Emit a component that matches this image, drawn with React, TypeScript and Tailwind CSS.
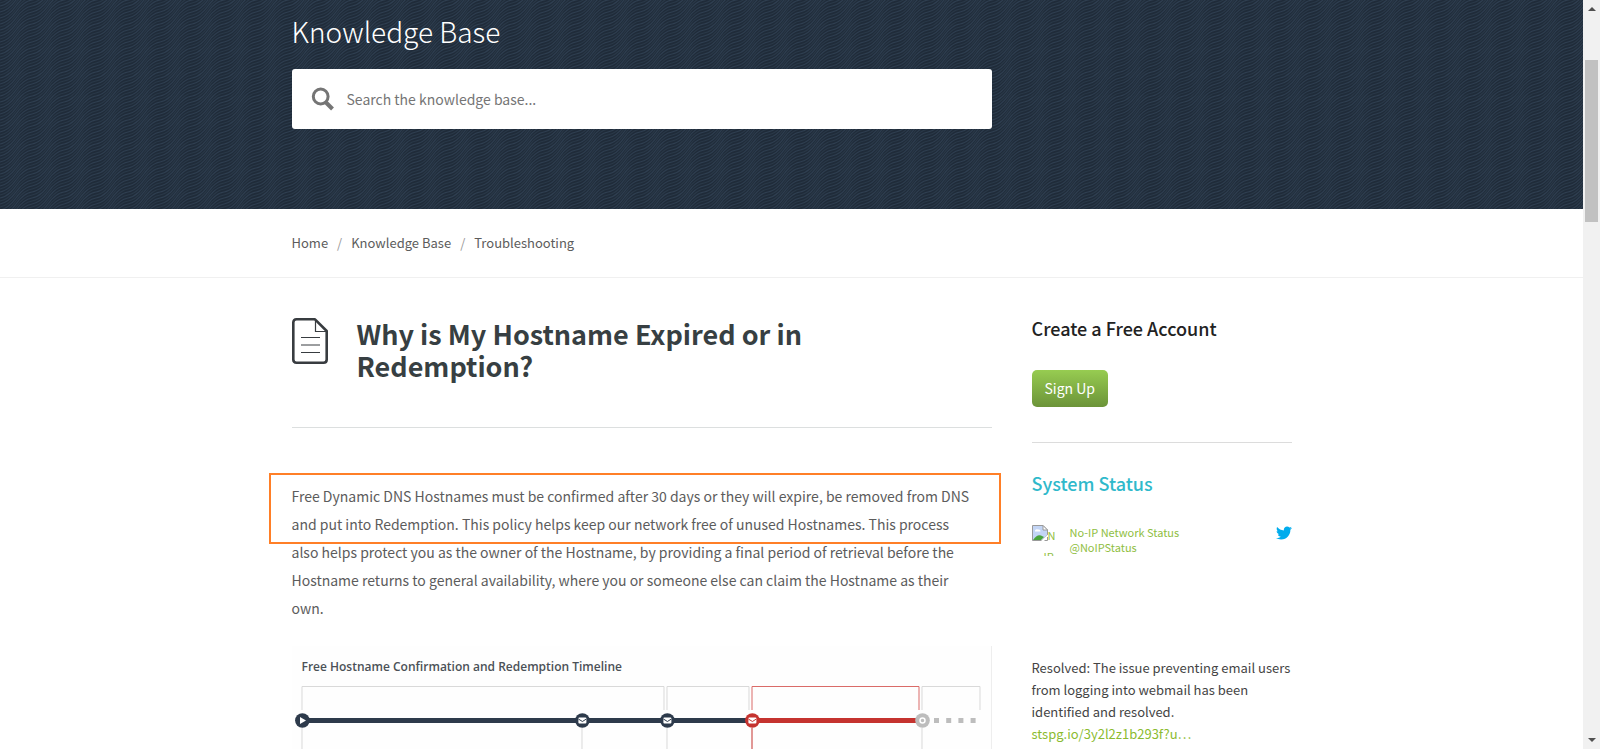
import React from "react";
import { FaTwitter } from "react-icons/fa";

const WAVES = Array.from({ length: 18 }, (_, i) => -27 + i * 3);

function WavePattern() {
  return (
    <svg className="absolute inset-0 h-full w-full" aria-hidden="true">
      <defs>
        <pattern id="waves" width="32" height="24" patternUnits="userSpaceOnUse">
          <rect width="32" height="24" fill="#1f2b39" />
          {WAVES.map((y, i) => (
            <path
              key={y}
              d={`M-1 ${y + 24}H0C6 ${y + 23} 11 ${y + 19} 16 ${y + 12}S26 ${y + 1} 32 ${y}H33`}
              fill="none"
              stroke={i % 2 ? "#2e3e50" : "#293848"}
              strokeWidth="1.2"
            />
          ))}
        </pattern>
      </defs>
      <rect width="100%" height="100%" fill="url(#waves)" />
    </svg>
  );
}

function SearchIcon() {
  return (
    <svg className="h-6 w-6 shrink-0" viewBox="0 0 24 24" fill="none" stroke="#757575" aria-hidden="true">
      <circle cx="9.7" cy="9.5" r="7.4" strokeWidth="3" />
      <path d="M14.5 15L21.5 22" strokeWidth="4" />
    </svg>
  );
}

function DocumentIcon() {
  return (
    <svg className="h-[46px] w-9 shrink-0" viewBox="0 0 36 46" fill="none" stroke="#383c40" aria-hidden="true">
      <path d="M4.5 1.3H23L34.7 13V41.5Q34.7 44.7 31.5 44.7H4.5Q1.3 44.7 1.3 41.5V4.5Q1.3 1.3 4.5 1.3Z" strokeWidth="2.6" strokeLinejoin="round" />
      <path d="M23.5 2V13.5H34" strokeWidth="1.2" />
      <path d="M9 19.5H28M9 27H28M9 34.5H28" strokeWidth="1" />
    </svg>
  );
}

function BrokenImage() {
  return (
    <svg className="h-4 w-4 shrink-0" viewBox="0 0 16 16" aria-hidden="true">
      <path d="M.5 .5H11L15.5 5V10L10 15.5H.5Z" fill="#c3d5f5" stroke="#9a9a9a" />
      <path d="M3 6.5a2 2 0 0 1 3-2a2 2 0 0 1 2.5 2Z" fill="#fff" />
      <path d="M1 15Q5 9 9 10.5L12 12L9 15Z" fill="#4aa53c" />
      <path d="M11 .5V5H15.5Z" fill="#fff" stroke="#9a9a9a" />
      <path d="M9 16L16 9.5V11L11 16Z" fill="#fff" />
      <path d="M12.5 15.5H15.5V12" fill="none" stroke="#9a9a9a" />
    </svg>
  );
}

function Mail({ x, color }: { x: number; color: string }) {
  return (
    <g>
      <circle cx={x} cy="40.5" r="7.3" fill={color} />
      <rect x={x - 4} y="37.5" width="8" height="6" rx="1" fill="#fff" />
      <path d={`M${x - 4} 39L${x} 41.5L${x + 4} 39`} fill="none" stroke={color} />
    </g>
  );
}

function Timeline() {
  return (
    <svg className="h-[100px] w-full" viewBox="0 0 699 100" preserveAspectRatio="xMinYMin meet" role="img" aria-label="Free hostname timeline">
      <g fill="none" stroke="#d9d9d9">
        <path d="M10 30V6.500H372V30M375 30V6.500H457V30M630 30V6.500H688V30" />
        <path d="M10 48V100M290 48V100M375 48V100M630 48V100" />
        <path d="M460 30V6.500H627V30" stroke="#da6b68" />
        <path d="M460 48V100" stroke="#c5332f" />
      </g>
      <path d="M10 40.5H460" stroke="#2d3a4b" strokeWidth="5" />
      <path d="M460 40.5H630" stroke="#c5332f" strokeWidth="5" />
      <circle cx="10.4" cy="40.5" r="7.3" fill="#2d3a4b" />
      <path d="M8 37L14 40.5L8 44Z" fill="#fff" />
      <Mail x={290.4} color="#2d3a4b" />
      <Mail x={375.4} color="#2d3a4b" />
      <Mail x={460.4} color="#c5332f" />
      <circle cx="630.5" cy="40.5" r="7.3" fill="#bdbdbd" />
      <circle cx="630.5" cy="40.5" r="2.5" fill="none" stroke="#fff" strokeWidth="1.5" />
      <path d="M642 40.5H689" stroke="#bdbdbd" strokeWidth="5" strokeDasharray="5 7.2" />
    </svg>
  );
}

function Scrollbar() {
  return (
    <div className="flex w-[17px] shrink-0 flex-col items-center justify-between bg-[#f1f1f1] py-1" aria-hidden="true">
      <svg className="h-2 w-2" viewBox="0 0 8 8"><path d="M0 7L4 3L8 7Z" fill="#505050" /></svg>
      <div className="mt-12 mb-auto h-[162px] w-[13px] bg-[#c1c1c1]" />
      <svg className="h-2 w-2" viewBox="0 0 8 8"><path d="M0 1L4 5L8 1Z" fill="#505050" /></svg>
    </div>
  );
}

export default function App() {
  return (
    <div className="flex h-screen overflow-hidden bg-white font-['Noto_Sans_CJK_SC','Noto_Sans',sans-serif] text-[#5c5c5c]">
      <div className="min-w-0 flex-1">
        <header className="relative h-[209px] bg-[#222f3f]">
          <WavePattern />
          <div className="relative mx-auto max-w-[1000px] pt-[9px]">
            <h1 className="text-[28px] leading-[44px] font-light text-white">Knowledge Base</h1>
            <label className="mt-4 flex h-[60px] w-[700px] items-center gap-3 rounded-[3px] bg-white px-[19px]">
              <SearchIcon />
              <input type="search" aria-label="Search the knowledge base" placeholder="Search the knowledge base..." className="min-w-0 flex-1 text-[14px] outline-none placeholder:text-[#757575]" />
            </label>
          </div>
        </header>

        <nav className="border-b border-[#f0f0f0]" aria-label="Breadcrumb">
          <div className="mx-auto flex h-[68px] max-w-[1000px] items-center gap-[9px] text-[13px]">
            <a href="#home">Home</a>
            <span className="text-[#999]">/</span>
            <a href="#kb">Knowledge Base</a>
            <span className="text-[#999]">/</span>
            <a href="#troubleshooting">Troubleshooting</a>
          </div>
        </nav>

        <div className="mx-auto flex max-w-[1000px] gap-10 pt-[38px]">
          <main className="w-[700px] pt-[2px]">
            <div className="flex gap-[29px] border-b border-[#dcdfdf] pb-[45px]">
              <DocumentIcon />
              <h2 className="text-[27px] leading-8 font-bold text-[#373f42]">
                Why is My Hostname Expired or in<br />Redemption?
              </h2>
            </div>
            <div className="relative pt-[54px]">
              <p className="max-w-[686px] text-[14px] leading-7">
                Free Dynamic DNS Hostnames must be confirmed after 30 days or they will expire, be removed from DNS and put into Redemption. This policy helps keep our network free of unused Hostnames. This process also helps protect you as the owner of the Hostname, by providing a final period of retrieval before the Hostname returns to general availability, where you or someone else can claim the Hostname as their own.
              </p>
              <div className="absolute top-[45px] -right-[9px] -left-[23px] h-[71px] border-2 border-[#ff7f27]" />
            </div>
            <figure className="mt-6 border-r border-[#eee] bg-[#fefefe]">
              <figcaption className="px-[10px] pt-[10px] pb-[2px] font-['Open_Sans',sans-serif] text-[12px] leading-[22px] font-semibold text-[#4b5157]">
                Free Hostname Confirmation and Redemption Timeline
              </figcaption>
              <Timeline />
            </figure>
          </main>

          <aside className="w-[260px]">
            <h3 className="text-[18px] leading-6 font-medium text-[#222]">Create a Free Account</h3>
            <button type="button" className="mt-[30px] h-[37px] rounded-[5px] bg-linear-to-b from-[#97cc51] to-[#6c9439] px-[13px] text-[14px] text-white">
              Sign Up
            </button>
            <hr className="mt-[35px] border-[#dcdcdc]" />
            <h3 className="mt-7 text-[18px] leading-6 font-medium text-[#2fb9cb]">System Status</h3>
            <div className="mt-[30px] flex text-[11px] leading-[15px] text-[#8fbe3f]">
              <a href="#avatar" className="h-[31px] w-6 overflow-hidden leading-[21px]" aria-label="No-IP Network Status avatar">
                <span className="flex"><BrokenImage />N</span>
                <span className="block pl-3">IP</span>
              </a>
              <a href="#status" className="ml-[14px]">No-IP Network Status<br />@NoIPStatus</a>
              <FaTwitter className="ml-auto h-4 w-4 text-[#00aced]" />
            </div>
            <p className="mt-[101px] text-[13px] leading-[22px] text-[#444]">
              Resolved: The issue preventing email users from logging into webmail has been identified and resolved.<br />
              <a href="#incident" className="text-[#8bbb2f]">stspg.io/3y2l2z1b293f?u…</a>
            </p>
          </aside>
        </div>
      </div>
      <Scrollbar />
    </div>
  );
}
